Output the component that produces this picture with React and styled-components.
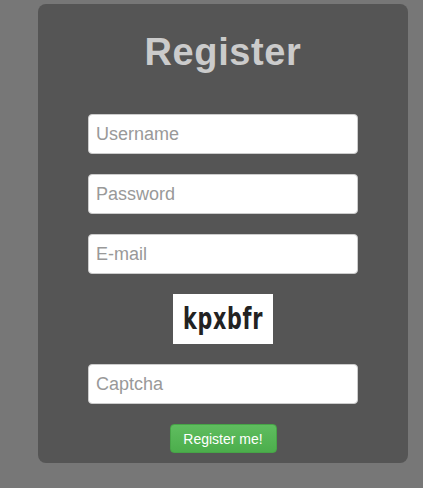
import styled, { createGlobalStyle } from "styled-components";

const GlobalStyle = createGlobalStyle`
  html, body {
    margin: 0;
    padding: 0;
    background-color: #777777;
    font-family: "Liberation Sans", Arial, sans-serif;
  }
`;

const Page = styled.div`
  padding: 4px 0 0 38px;
  height: 484px;
`;

const Card = styled.form`
  width: 370px;
  height: 459px;
  box-sizing: border-box;
  background-color: #555555;
  border-radius: 8px;
  display: flex;
  flex-direction: column;
  align-items: center;
  padding-top: 23px;
`;

const Title = styled.h1`
  margin: 0 0 37px;
  font-size: 38px;
  line-height: 50px;
  font-weight: bold;
  color: #cbcbcb;
  letter-spacing: 0.6px;
`;

const Fields = styled.div`
  display: flex;
  flex-direction: column;
  align-items: center;
  gap: 20px;
`;

const Input = styled.input`
  width: 270px;
  height: 40px;
  box-sizing: border-box;
  padding: 0 7px;
  border: 1px solid #cccccc;
  border-radius: 4px;
  background: #ffffff;
  font-family: "Liberation Sans", Arial, sans-serif;
  font-size: 18px;
  color: #555555;
  outline: none;

  &::placeholder {
    color: #999999;
  }
`;

const Captcha = styled.div`
  width: 100px;
  height: 50px;
  background: #ffffff;
  display: flex;
  align-items: center;
  justify-content: center;
  overflow: hidden;
`;

const CaptchaText = styled.span`
  display: inline-block;
  font-family: "DejaVu Sans Condensed", "DejaVu Sans", sans-serif;
  font-weight: bold;
  font-size: 31px;
  line-height: 1;
  color: #222222;
  letter-spacing: 1px;
  transform: scaleX(0.74);
  margin-top: -2px;
`;

const Button = styled.button`
  height: 29px;
  width: 107px;
  padding: 0;
  border: 1px solid #47a447;
  border-radius: 4px;
  background: linear-gradient(#5fbd5f, #4cae4c);
  color: #ffffff;
  font-family: "Liberation Sans", Arial, sans-serif;
  font-size: 14px;
`;

export default function App() {
  return (
    <>
      <GlobalStyle />
      <Page>
        <Card onSubmit={(e) => e.preventDefault()}>
          <Title>Register</Title>
          <Fields>
            <Input placeholder="Username" />
            <Input type="password" placeholder="Password" />
            <Input placeholder="E-mail" />
            <Captcha>
              <CaptchaText>kpxbfr</CaptchaText>
            </Captcha>
            <Input placeholder="Captcha" />
            <Button type="submit">Register me!</Button>
          </Fields>
        </Card>
      </Page>
    </>
  );
}
